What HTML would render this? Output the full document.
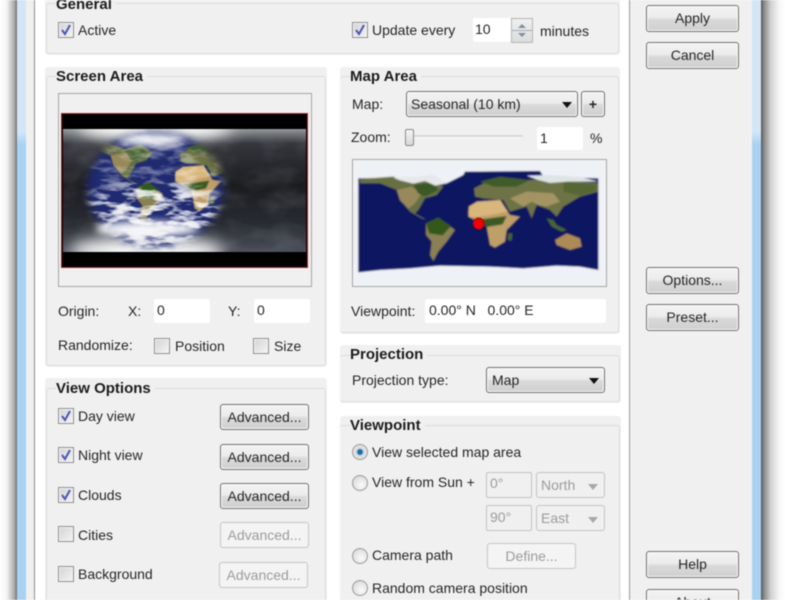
<!DOCTYPE html>
<html><head><meta charset="utf-8"><style>
html,body{margin:0;padding:0;width:785px;height:600px;overflow:hidden;background:#fff}
#p{position:absolute;left:0;top:0;width:785px;height:600px;overflow:hidden;background:#fff;font:14px "Liberation Sans",sans-serif;color:#262626;filter:blur(.45px)}
#p div{position:absolute;box-sizing:border-box}
.t{white-space:nowrap;line-height:20px;height:20px}
.d{color:#9c9c9c}
.h{font-weight:bold;font-size:15px;color:#1c1c1c;background:#f0f0f0;padding:0 4px 0 0}
.g{background:#f0f0f0;border-radius:3px}
.l{border:1px solid #dcdcdc;border-radius:3px}
.b{border:1px solid #707070;border-radius:3px;background:linear-gradient(#f3f3f3 0,#ececec 45%,#d9d9d9 55%,#cfcfcf 100%);text-align:center;line-height:24px;box-shadow:inset 0 0 0 1px #fbfbfb}
.x{border:1px solid #c4c4c4;border-radius:3px;background:#f4f4f4;text-align:center;line-height:24px;color:#9c9c9c}
.i{background:#fff;border-radius:2px;line-height:23px;padding-left:4px}
.c{width:16px;height:16px;border:1px solid #8e8f8f;background:linear-gradient(135deg,#d3d3d6,#f4f4f4);box-shadow:inset 0 0 0 1px #f4f4f4}
.a{width:0;height:0;border-left:5px solid transparent;border-right:5px solid transparent;border-top:6px solid #111}
.r{width:16px;height:16px;border-radius:50%;border:1px solid #9a9a9a;background:radial-gradient(circle at 60% 65%,#fafafa,#d2d2d2)}
svg{position:absolute;overflow:hidden}
</style></head><body><div id="p">
<div style="left:0;top:0;width:17px;height:600px;background:linear-gradient(90deg,#fff 0,#f4f4f4 40%,#a8a8a8 85%,#707070 100%)"></div>
<div style="left:17px;top:0;width:9px;height:600px;background:linear-gradient(#d2e6f6 0,#d2e6f6 22%,#a9d2f2 24%,#a9d2f2 100%)"></div>
<div style="left:26px;top:0;width:9px;height:600px;background:#f0f0f0;border-right:1px solid #8f8f8f"></div>
<div style="left:629px;top:0;width:123px;height:600px;background:#f0f0f0;border-left:1px solid #9a9a9a"></div>
<div style="left:752px;top:0;width:9px;height:600px;background:linear-gradient(#d2e6f6 0,#d2e6f6 22%,#a9d2f2 24%,#a9d2f2 100%)"></div>
<div style="left:761px;top:0;width:24px;height:600px;background:linear-gradient(90deg,#555 0,#888 12%,#cfcfcf 40%,#f6f6f6 75%,#fff 100%)"></div>

<!-- General -->
<div class="g" style="left:45px;top:-5px;width:575px;height:60px"></div>
<div class="l" style="left:46px;top:3px;width:573px;height:51px"></div>
<div class="t h" style="left:56px;top:-5px">General</div>
<div class="c" style="left:58px;top:22px"></div>
<svg style="left:58px;top:22px" width="16" height="16"><path d="M4 8l3 4 5-9" fill="none" stroke="#4a58b4" stroke-width="2"/></svg>
<div class="t" style="left:78px;top:20px">Active</div>
<div class="c" style="left:352px;top:22px"></div>
<svg style="left:352px;top:22px" width="16" height="16"><path d="M4 8l3 4 5-9" fill="none" stroke="#4a58b4" stroke-width="2"/></svg>
<div class="t" style="left:372px;top:20px">Update every</div>
<div class="i" style="left:473px;top:18px;width:38px;height:24px;padding-left:2px">10</div>
<div style="left:511px;top:18px;width:22px;height:25px;border:1px solid #b5b5b5;background:linear-gradient(#f0f0f0,#dcdcdc)"></div>
<svg style="left:511px;top:18px" width="22" height="25"><path d="M1 12.5h20" stroke="#aaa"/><path d="M7 10l4-4 4 4z" fill="#7f8ea6"/><path d="M7 15l4 4 4-4z" fill="#7f8ea6"/></svg>
<div class="t" style="left:540px;top:21px">minutes</div>

<!-- Screen Area -->
<div class="g" style="left:45px;top:67px;width:282px;height:300px"></div>
<div class="l" style="left:46px;top:76px;width:280px;height:290px"></div>
<div class="t h" style="left:56px;top:67px">Screen Area</div>
<div style="left:58px;top:93px;width:254px;height:194px;border:1px solid #a6a6a6;background:#f0f0f0"></div>
<div style="left:61px;top:113px;width:247px;height:155px;background:#000;border:1px solid #b02020"></div>
<svg style="left:63px;top:129px" width="243" height="123" viewBox="0 0 243 123">
<defs>
<filter id="f1" filterUnits="userSpaceOnUse" x="-60" y="-60" width="900" height="600"><feGaussianBlur stdDeviation="1.6"/></filter>
<filter id="f2" filterUnits="userSpaceOnUse" x="-60" y="-60" width="400" height="260"><feGaussianBlur stdDeviation="8"/></filter>
<filter id="f3" filterUnits="userSpaceOnUse" x="-60" y="-60" width="400" height="260"><feGaussianBlur stdDeviation="4"/></filter>
<filter id="f4" filterUnits="userSpaceOnUse" x="0" y="0" width="780" height="405"><feGaussianBlur stdDeviation="2"/></filter>
<filter id="cl" filterUnits="userSpaceOnUse" x="0" y="0" width="243" height="123"><feTurbulence type="fractalNoise" baseFrequency=".045 .13" numOctaves="3" seed="7"/><feColorMatrix values="0 0 0 0 1  0 0 0 0 1  0 0 0 0 1  4 0 0 0 -1.75"/></filter>
<filter id="ng" filterUnits="userSpaceOnUse" x="0" y="0" width="243" height="123"><feTurbulence type="fractalNoise" baseFrequency=".03 .05" numOctaves="3" seed="3"/><feColorMatrix values="0 0 0 0 .4  0 0 0 0 .42  0 0 0 0 .48  1.2 0 0 0 -.5"/></filter>
<linearGradient id="sg" x1="0" y1="0" x2="0" y2="1"><stop offset="0" stop-color="#94979c"/><stop offset=".12" stop-color="#34363c"/><stop offset=".45" stop-color="#1b1c1f"/><stop offset=".76" stop-color="#282b31"/><stop offset="1" stop-color="#4a4e58"/></linearGradient>
<radialGradient id="low" cx=".37" cy=".74" r=".36"><stop offset="0" stop-color="#fff"/><stop offset=".7" stop-color="#ccc"/><stop offset="1" stop-color="#000"/></radialGradient>
<mask id="day" maskUnits="userSpaceOnUse" x="0" y="0" width="243" height="123"><ellipse cx="92" cy="60" rx="68" ry="58" fill="#fff" filter="url(#f3)"/></mask>
<mask id="cm" maskUnits="userSpaceOnUse" x="0" y="0" width="243" height="123"><rect width="243" height="123" fill="url(#low)"/></mask>
<g id="cont">
<path d="M30 72L130 65 190 85 240 70 280 95 260 120 225 130 205 165 195 175 230 195 215 190 180 170 155 140 140 105 90 85 30 85Z" fill="#666f42"/>
<path d="M140 105L185 95 215 115 195 145 175 161 150 136Z" fill="#97895a"/>
<path d="M190 90L250 82 265 105 225 125 205 115Z" fill="#3a5826"/>
<path d="M228 205L265 188 315 225 290 260 265 290 250 318 240 300 245 260 228 240Z" fill="#8a8052"/>
<path d="M228 205L265 188 303 213 278 241 238 235Z" fill="#31591b"/>
<path d="M355 165L380 140 450 135 480 180 510 185 470 225 465 260 435 278 420 270 410 215 375 195 355 185Z" fill="#bf9f68"/>
<path d="M356 155L381 140 451 135 473 170 413 182 358 187Z" fill="#d8b67c"/>
<path d="M380 195L470 183 458 208 410 216Z" fill="#3a5a20"/>
<path d="M372 100L430 70 520 75 640 75 745 85V110L690 125 640 155 620 185 600 165 560 150 545 190 530 155 480 170 460 135 400 130 375 125Z" fill="#6e7345"/>
<path d="M480 130L530 110 610 115 630 140 590 155 565 150 545 140 520 155Z" fill="#a59464"/>
<path d="M390 80L450 65 540 75 500 95 430 95Z" fill="#415b29"/>
<path d="M640 80L740 88V108L690 122 640 110Z" fill="#566636"/>
<path d="M590 190L610 195 620 210 650 225 635 230 605 215ZM475 235H487L485 257 473 255Z" fill="#4a652d"/>
<path d="M615 255L650 235 690 250 695 275 660 285 620 270Z" fill="#ad8b56"/>
</g>
</defs>
<rect width="243" height="123" fill="url(#sg)"/>
<rect width="243" height="123" filter="url(#ng)" opacity=".3"/>
<ellipse cx="92" cy="-2" rx="78" ry="14" fill="#fff" filter="url(#f2)"/>
<ellipse cx="84" cy="122" rx="78" ry="14" fill="#fff" filter="url(#f2)"/>
<g mask="url(#day)">
<rect width="243" height="123" fill="#1f2a70"/>
<g transform="translate(5.5 -7) scale(.3 .32)" filter="url(#f1)"><use href="#cont"/></g>
<rect width="243" height="123" filter="url(#cl)" opacity=".35"/>
<g mask="url(#cm)"><rect width="243" height="123" filter="url(#cl)"/><rect width="243" height="123" filter="url(#cl)" opacity=".6"/></g>
</g>
<ellipse cx="90" cy="11" rx="32" ry="6" fill="#fff" filter="url(#f3)"/>
<ellipse cx="84" cy="100" rx="52" ry="8" fill="#f4f5f8" filter="url(#f3)"/>
</svg>

<div class="t" style="left:58px;top:301px">Origin:</div>
<div class="t" style="left:128px;top:301px">X:</div>
<div class="i" style="left:154px;top:299px;width:56px;height:24px;padding-left:3px">0</div>
<div class="t" style="left:228px;top:301px">Y:</div>
<div class="i" style="left:254px;top:299px;width:56px;height:24px;padding-left:3px">0</div>
<div class="t" style="left:58px;top:335px">Randomize:</div>
<div class="c" style="left:154px;top:338px"></div>
<div class="t" style="left:175px;top:336px">Position</div>
<div class="c" style="left:253px;top:338px"></div>
<div class="t" style="left:274px;top:336px">Size</div>

<!-- View Options -->
<div class="g" style="left:45px;top:378px;width:282px;height:230px"></div>
<div class="l" style="left:46px;top:388px;width:280px;height:230px"></div>
<div class="t h" style="left:56px;top:379px">View Options</div>
<div class="c" style="left:58px;top:408px"></div>
<svg style="left:58px;top:408px" width="16" height="16"><path d="M4 8l3 4 5-9" fill="none" stroke="#4a58b4" stroke-width="2"/></svg>
<div class="t" style="left:78px;top:406px">Day view</div>
<div class="b" style="left:220px;top:404px;width:89px;height:26px">Advanced...</div>
<div class="c" style="left:58px;top:447px"></div>
<svg style="left:58px;top:447px" width="16" height="16"><path d="M4 8l3 4 5-9" fill="none" stroke="#4a58b4" stroke-width="2"/></svg>
<div class="t" style="left:78px;top:445px">Night view</div>
<div class="b" style="left:220px;top:444px;width:89px;height:26px">Advanced...</div>
<div class="c" style="left:58px;top:487px"></div>
<svg style="left:58px;top:487px" width="16" height="16"><path d="M4 8l3 4 5-9" fill="none" stroke="#4a58b4" stroke-width="2"/></svg>
<div class="t" style="left:78px;top:485px">Clouds</div>
<div class="b" style="left:220px;top:483px;width:89px;height:26px">Advanced...</div>
<div class="c" style="left:58px;top:526px"></div>
<div class="t" style="left:78px;top:525px">Cities</div>
<div class="x" style="left:220px;top:522px;width:89px;height:26px">Advanced...</div>
<div class="c" style="left:58px;top:566px"></div>
<div class="t" style="left:78px;top:564px">Background</div>
<div class="x" style="left:219px;top:562px;width:89px;height:26px">Advanced...</div>

<!-- Map Area -->
<div class="g" style="left:340px;top:67px;width:280px;height:267px"></div>
<div class="l" style="left:340px;top:76px;width:279px;height:257px;border-left:0"></div>
<div class="t h" style="left:350px;top:67px">Map Area</div>
<div class="t" style="left:352px;top:94px">Map:</div>
<div class="b" style="left:406px;top:91px;width:172px;height:26px;text-align:left;padding-left:4px">Seasonal (10 km)</div>
<div class="a" style="left:562px;top:102px"></div>
<div class="b" style="left:581px;top:91px;width:24px;height:26px;font-weight:bold">+</div>
<div class="t" style="left:351px;top:127px">Zoom:</div>
<div style="left:406px;top:135px;width:117px;height:3px;background:#d8d8d8;border-bottom:1px solid #f8f8f8"></div>
<div style="left:405px;top:129px;width:9px;height:17px;border:1px solid #8a8a8a;border-radius:2px;background:linear-gradient(#f6f6f6,#d8d8d8)"></div>
<div class="i" style="left:537px;top:127px;width:46px;height:23px;padding-left:3px">1</div>
<div class="t" style="left:590px;top:128px">%</div>
<div style="left:352px;top:159px;width:255px;height:128px;border:1px solid #a6a6a6;background:#f0f2f5"></div>
<svg style="left:350px;top:155px" width="260" height="135" viewBox="0 0 780 405">
<rect x="9" y="16" width="759" height="368" fill="#f0f2f5"/>
<g filter="url(#f4)">
<rect x="20" y="22" width="735" height="365" fill="#eef1f5"/>
<path d="M25 70H210L240 60 290 85 340 60 345 50 570 48 580 65 745 70V345L690 335 620 332 520 340 420 335 270 332 180 340 90 345 25 352Z" fill="#0a1560"/>
<use href="#cont"/>
<path d="M130 68L210 64 250 58 290 85 255 92 225 78 190 86 150 76Z" fill="#e6e8ea"/>
<path d="M530 62L600 60 690 66 745 80 655 80 600 84 560 74Z" fill="#dfe4e6"/>
</g>
<circle cx="386" cy="206" r="17" fill="#f00000" stroke="#7a0a12" stroke-width="2"/>
</svg>
<div class="t" style="left:351px;top:301px">Viewpoint:</div>
<div class="i" style="left:425px;top:299px;width:181px;height:24px;padding-left:4px;white-space:pre">0.00° N   0.00° E</div>

<!-- Projection -->
<div class="g" style="left:340px;top:345px;width:281px;height:58px"></div>
<div class="l" style="left:340px;top:355px;width:280px;height:47px;border-left:0"></div>
<div class="t h" style="left:350px;top:345px">Projection</div>
<div class="t" style="left:352px;top:370px">Projection type:</div>
<div class="b" style="left:486px;top:367px;width:119px;height:26px;text-align:left;padding-left:5px">Map</div>
<div class="a" style="left:589px;top:378px"></div>

<!-- Viewpoint -->
<div class="g" style="left:340px;top:416px;width:281px;height:200px"></div>
<div class="l" style="left:340px;top:425px;width:280px;height:200px;border-left:0"></div>
<div class="t h" style="left:350px;top:416px">Viewpoint</div>
<div class="r" style="left:352px;top:444px;background:radial-gradient(circle,#0f5f9c 0,#2d7cb4 26%,#dcdcdc 36%,#e8e8e8 100%)"></div>
<div class="t" style="left:372px;top:442px">View selected map area</div>
<div class="r" style="left:352px;top:475px"></div>
<div class="t" style="left:372px;top:472px">View from Sun +</div>
<div style="left:486px;top:472px;width:46px;height:26px;border:1px solid #c4c4c4;border-radius:2px;background:#f0f0f0"></div>
<div class="t d" style="left:490px;top:473px">0°</div>
<div class="x" style="left:536px;top:472px;width:69px;height:26px;text-align:left;padding-left:4px;background:#f0f0f0">North</div>
<div class="a" style="left:588px;top:484px;border-top-color:#a8a8a8"></div>
<div style="left:486px;top:505px;width:46px;height:26px;border:1px solid #c4c4c4;border-radius:2px;background:#f0f0f0"></div>
<div class="t d" style="left:490px;top:507px">90°</div>
<div class="x" style="left:536px;top:505px;width:69px;height:26px;text-align:left;padding-left:4px;background:#f0f0f0">East</div>
<div class="a" style="left:588px;top:517px;border-top-color:#a8a8a8"></div>
<div class="r" style="left:352px;top:548px"></div>
<div class="t" style="left:372px;top:545px">Camera path</div>
<div class="x" style="left:487px;top:543px;width:89px;height:26px">Define...</div>
<div class="r" style="left:352px;top:580px"></div>
<div class="t" style="left:372px;top:578px">Random camera position</div>

<!-- Right buttons -->
<div class="b" style="left:646px;top:5px;width:93px;height:27px">Apply</div>
<div class="b" style="left:646px;top:42px;width:93px;height:27px">Cancel</div>
<div class="b" style="left:646px;top:267px;width:93px;height:27px">Options...</div>
<div class="b" style="left:646px;top:304px;width:93px;height:27px">Preset...</div>
<div class="b" style="left:646px;top:551px;width:93px;height:27px">Help</div>
<div class="b" style="left:646px;top:589px;width:93px;height:27px">About</div>
</div></body></html>
